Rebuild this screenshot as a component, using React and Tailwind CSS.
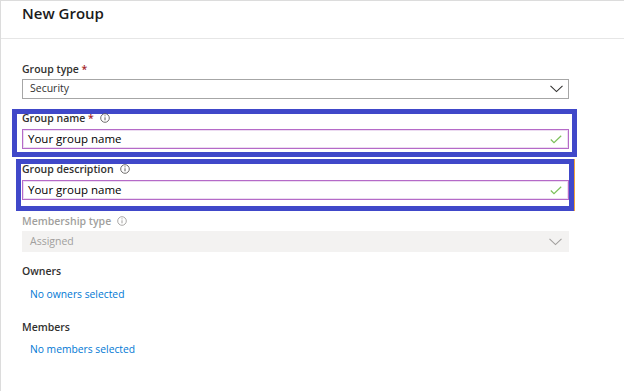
import React from "react";

function Info({ color = "#605e5c" }) {
  return (
    <svg width="10" height="10" viewBox="0 0 10 10" className="ml-[6px] shrink-0">
      <circle cx="5" cy="5" r="4.3" fill="none" stroke={color} strokeWidth="0.9" />
      <line x1="5" y1="4.3" x2="5" y2="7.3" stroke={color} strokeWidth="1" />
      <circle cx="5" cy="2.8" r="0.6" fill={color} />
    </svg>
  );
}

function Chevron({ color = "#323130" }) {
  return (
    <svg width="13" height="8" viewBox="0 0 13 8" className="shrink-0">
      <polyline points="0.5,0.8 6.5,6.6 12.5,0.8" fill="none" stroke={color} strokeWidth="1.1" />
    </svg>
  );
}

function Check() {
  return (
    <svg width="12" height="9" viewBox="0 0 12 9" className="shrink-0">
      <polyline points="0.8,4.5 4,7.6 11.2,0.8" fill="none" stroke="#7cc05a" strokeWidth="1.2" />
    </svg>
  );
}

function TextInput({ value }) {
  return (
    <div className="h-[20px] w-[547px] border border-[#b56ac8] shadow-[inset_0_0_0_1px_#ecdcf1] flex items-center justify-between pl-[5px] pr-[6px] bg-white">
      <span className="text-[11.5px] text-black leading-[18px]">{value}</span>
      <Check />
    </div>
  );
}

export default function App() {
  return (
    <div className="w-[624px] h-[391px] bg-white border-l border-t border-[#dcdcdc] font-['Open_Sans',sans-serif] overflow-hidden">
      <div className="h-[38px] border-b border-[#e6e6e6] pl-[21px] pt-[2px]">
        <div className="text-[15px] leading-[20px] font-semibold text-[#1b1b1b]">New Group</div>
      </div>
      <div className="ml-[21px] w-[547px] flex flex-col">
        <div className="mt-[23px] text-[10.5px] leading-[14px] font-semibold text-[#323130]">
          Group type <span className="text-[#a4262c]">*</span>
        </div>
        <div className="mt-[3px] h-[20px] border border-[#a6a6a6] flex items-center justify-between pl-[7px] pr-[5px]">
          <span className="text-[10.5px] text-[#323130]">Security</span>
          <Chevron />
        </div>

        <div className="mt-[10px] -ml-[10px] w-[565px] border-[5px] border-[#4048c9] pl-[5px] pr-[3px] pb-[3px]">
          <div className="-mt-[2px] flex items-center text-[10.5px] leading-[12px] font-semibold text-[#323130]">
            Group name&nbsp;<span className="text-[#a4262c]">*</span>
            <Info />
          </div>
          <div className="mt-[5px]">
            <TextInput value="Your group name" />
          </div>
        </div>

        <div className="mt-[2px] -ml-[6px] w-[558px] border-[5px] border-[#4048c9] shadow-[1px_0_0_#f2a43a] pl-[1px] pb-[6px]">
          <div className="-mt-[1px] flex items-center text-[10.5px] leading-[12px] font-semibold text-[#323130]">
            Group description
            <Info />
          </div>
          <div className="mt-[5px]">
            <TextInput value="Your group name" />
          </div>
        </div>

        <div className="mt-[3px] flex items-center text-[10.5px] leading-[14px] font-semibold text-[#a19f9d]">
          Membership type
          <Info color="#a19f9d" />
        </div>
        <div className="mt-[3px] h-[21px] bg-[#f3f2f1] flex items-center justify-between pl-[8px] pr-[7px]">
          <span className="text-[10.5px] text-[#a19f9d]">Assigned</span>
          <Chevron color="#a19f9d" />
        </div>

        <div className="mt-[12px] text-[10.5px] leading-[14px] font-semibold text-[#323130]">Owners</div>
        <div className="mt-[9px] pl-[8px] text-[10.3px] leading-[14px] text-[#0078d4]">No owners selected</div>

        <div className="mt-[19px] text-[10.5px] leading-[14px] font-semibold text-[#323130]">Members</div>
        <div className="mt-[8px] pl-[8px] text-[10.3px] leading-[14px] text-[#0078d4]">No members selected</div>
      </div>
    </div>
  );
}
